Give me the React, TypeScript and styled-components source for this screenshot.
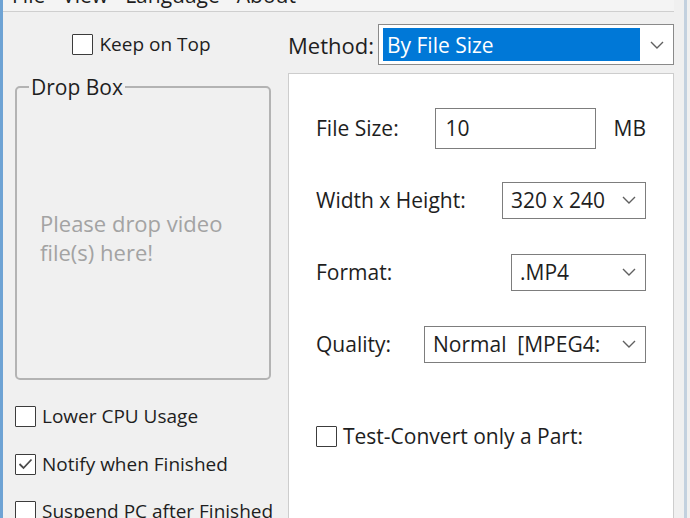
import styled, { createGlobalStyle } from "styled-components";

const GlobalStyle = createGlobalStyle`
    html, body {
        margin: 0;
        padding: 0;
        overflow: hidden;
        background: #f0f0f0;
    }
    body {
        font-family: "Open Sans", "Noto Sans", sans-serif;
        font-size: 19px;
        color: #1e1e1e;
    }
`;

const Window = styled.div`
    display: flex;
    flex-direction: row;
    width: 690px;
    height: 518px;
    overflow: hidden;
    background: #f0f0f0;
`;

const BlueEdge = styled.div`
    width: 3px;
    flex-shrink: 0;
    background: #6ea3d4;
`;

const RightEdge = styled.div`
    width: 3px;
    flex-shrink: 0;
    margin-left: 10px;
    background: #c3d1df;
`;

const Main = styled.div`
    display: flex;
    flex-direction: column;
    width: 671px;
    min-height: 0;
`;

const MenuBar = styled.div`
    display: flex;
    flex-direction: row;
    flex-shrink: 0;
    gap: 17px;
    height: 11px;
    padding-left: 9px;
    overflow: hidden;
    border-bottom: 1px solid #cfcfcf;
    background: #f4f4f4;
`;

const MenuItem = styled.span`
    font-size: 21px;
    line-height: 21px;
    margin-top: -15px;
    white-space: nowrap;
`;

const Body = styled.div`
    display: flex;
    flex-direction: row;
    flex-shrink: 0;
    gap: 17px;
    padding-left: 12px;
`;

const LeftColumn = styled.div`
    display: flex;
    flex-direction: column;
    width: 256px;
`;

const RightColumn = styled.div`
    display: flex;
    flex-direction: column;
    width: 386px;
    font-size: 21px;
`;

const CheckRow = styled.label<{ $top: number }>`
    display: flex;
    flex-direction: row;
    align-items: center;
    gap: 6px;
    height: 22px;
    margin-top: ${p => p.$top}px;
    white-space: nowrap;
`;

const CenteredCheckRow = styled(CheckRow)`
    justify-content: center;
    padding-right: 3px;
`;

const Box = styled.span`
    display: flex;
    align-items: center;
    justify-content: center;
    width: 19px;
    height: 19px;
    flex-shrink: 0;
    border: 1.5px solid #3c3c3c;
    border-radius: 1px;
    background: #ffffff;
`;

const DropBox = styled.fieldset`
    box-sizing: border-box;
    margin: 21px 0 0 0;
    height: 304px;
    padding: 0;
    border: 2px solid #b3b3b3;
    border-radius: 5px;
`;

const Legend = styled.legend`
    margin-left: 12px;
    padding: 0 2px;
    font-size: 21px;
    line-height: 22px;
    color: #1e1e1e;
`;

const DropArea = styled.div`
    display: flex;
    align-items: center;
    height: 280px;
    padding-left: 23px;
`;

const DropHint = styled.p`
    margin: 0;
    font-size: 22px;
    line-height: 29px;
    color: #a3a3a3;
`;

const MethodRow = styled.div`
    display: flex;
    flex-direction: row;
    align-items: center;
    gap: 4px;
    margin-top: 12px;
    height: 41px;
`;

const MethodLabel = styled.span`
    font-size: 22px;
    white-space: nowrap;
`;

const MethodCombo = styled.div`
    display: flex;
    flex-direction: row;
    align-items: center;
    flex: 1;
    height: 41px;
    box-sizing: border-box;
    border: 1.5px solid #8a8a8a;
    background: #ffffff;
    padding: 3px 0 3px 4px;
`;

const Selected = styled.div`
    flex: 1;
    height: 33px;
    display: flex;
    align-items: center;
    padding-left: 4px;
    background: #0078d7;
    color: #ffffff;
`;

const ChevronSlot = styled.div<{ $width: number }>`
    display: flex;
    align-items: center;
    justify-content: flex-end;
    padding-right: 9px;
    box-sizing: border-box;
    width: ${p => p.$width}px;
    flex-shrink: 0;
`;

const Panel = styled.div`
    display: flex;
    flex-direction: column;
    margin-top: 8px;
    height: 480px;
    padding: 18px 27px 0 27px;
    border: 1.5px solid #cdcdcd;
    border-right-width: 1px;
    background: #ffffff;
`;

const FieldRow = styled.div`
    display: flex;
    flex-direction: row;
    align-items: center;
    height: 72px;
`;

const FieldLabel = styled.span`
    white-space: nowrap;
`;

const TextInput = styled.div`
    display: flex;
    align-items: center;
    margin-left: auto;
    width: 161px;
    height: 41px;
    box-sizing: border-box;
    padding-left: 10px;
    border: 1.5px solid #7d7d7d;
    background: #ffffff;
`;

const Unit = styled.span`
    margin-left: 18px;
`;

const Select = styled.div<{ $width: number }>`
    display: flex;
    flex-direction: row;
    align-items: center;
    margin-left: auto;
    width: ${p => p.$width}px;
    height: 37px;
    box-sizing: border-box;
    padding-left: 8px;
    border: 1.5px solid #7d7d7d;
    background: #ffffff;
    white-space: nowrap;
    overflow: hidden;
`;

const SelectText = styled.span`
    flex: 1;
    overflow: hidden;
`;

const Chevron = () => (
    <svg width="14" height="8" viewBox="0 0 14 8">
        <polyline points="1,1 7,7 13,1" fill="none" stroke="#606060" strokeWidth="1.4" />
    </svg>
);

const Check = () => (
    <svg width="15" height="12" viewBox="0 0 15 12">
        <polyline points="1.5,6 5.5,10 13.5,1.5" fill="none" stroke="#4a4a4a" strokeWidth="1.8" />
    </svg>
);

const CheckBox = ({ checked }: { checked?: boolean }) => (
    <Box>{checked && <Check />}</Box>
);

const App = () => {
    return (
        <>
            <GlobalStyle />
            <Window>
                <BlueEdge />
                <Main>
                    <MenuBar>
                        <MenuItem>File</MenuItem>
                        <MenuItem>View</MenuItem>
                        <MenuItem>Language</MenuItem>
                        <MenuItem>About</MenuItem>
                    </MenuBar>
                    <Body>
                        <LeftColumn>
                            <CenteredCheckRow $top={21}>
                                <CheckBox />
                                Keep on Top
                            </CenteredCheckRow>
                            <DropBox>
                                <Legend>Drop Box</Legend>
                                <DropArea>
                                    <DropHint>
                                        Please drop video<br />file(s) here!
                                    </DropHint>
                                </DropArea>
                            </DropBox>
                            <CheckRow $top={25}>
                                <CheckBox />
                                Lower CPU Usage
                            </CheckRow>
                            <CheckRow $top={26}>
                                <CheckBox checked />
                                Notify when Finished
                            </CheckRow>
                            <CheckRow $top={25}>
                                <CheckBox />
                                Suspend PC after Finished
                            </CheckRow>
                        </LeftColumn>
                        <RightColumn>
                            <MethodRow>
                                <MethodLabel>Method:</MethodLabel>
                                <MethodCombo>
                                    <Selected>By File Size</Selected>
                                    <ChevronSlot $width={33}>
                                        <Chevron />
                                    </ChevronSlot>
                                </MethodCombo>
                            </MethodRow>
                            <Panel>
                                <FieldRow>
                                    <FieldLabel>File Size:</FieldLabel>
                                    <TextInput>10</TextInput>
                                    <Unit>MB</Unit>
                                </FieldRow>
                                <FieldRow>
                                    <FieldLabel>Width x Height:</FieldLabel>
                                    <Select $width={144}>
                                        <SelectText>320 x 240</SelectText>
                                        <ChevronSlot $width={32}>
                                            <Chevron />
                                        </ChevronSlot>
                                    </Select>
                                </FieldRow>
                                <FieldRow>
                                    <FieldLabel>Format:</FieldLabel>
                                    <Select $width={135}>
                                        <SelectText>.MP4</SelectText>
                                        <ChevronSlot $width={32}>
                                            <Chevron />
                                        </ChevronSlot>
                                    </Select>
                                </FieldRow>
                                <FieldRow>
                                    <FieldLabel>Quality:</FieldLabel>
                                    <Select $width={222}>
                                        <SelectText>Normal&nbsp;&nbsp;[MPEG4: 700 kbps]</SelectText>
                                        <ChevronSlot $width={42}>
                                            <Chevron />
                                        </ChevronSlot>
                                    </Select>
                                </FieldRow>
                                <CheckRow $top={45}>
                                    <CheckBox />
                                    Test-Convert only a Part:
                                </CheckRow>
                            </Panel>
                        </RightColumn>
                    </Body>
                </Main>
                <RightEdge />
            </Window>
        </>
    );
};

export default App;
